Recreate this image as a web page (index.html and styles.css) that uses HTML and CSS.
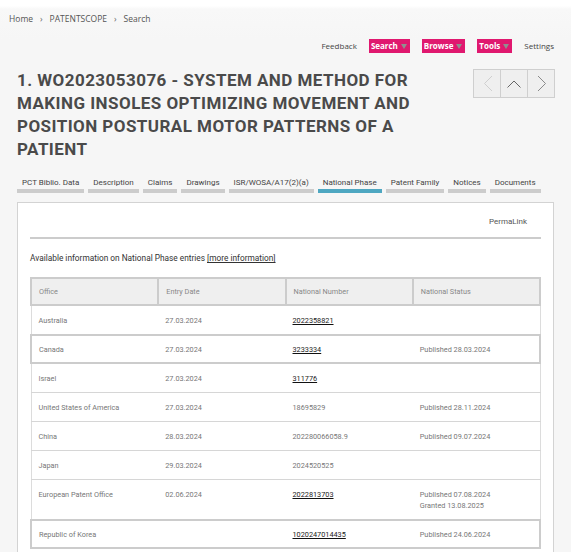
FILE: index.html
```html
<!DOCTYPE html>
<html lang="en">
<head>
<meta charset="utf-8">
<title>WO2023053076 - National Phase</title>
<link rel="stylesheet" href="styles.css">
</head>
<body>
<div class="crumbs">
  <span>Home</span><span class="sep">&#8250;</span><span>PATENTSCOPE</span><span class="sep">&#8250;</span><span>Search</span>
</div>
<nav class="topnav">
  <span class="nav-item">Feedback</span>
  <span class="nav-item pink">Search<i class="caret"></i></span>
  <span class="nav-item pink">Browse<i class="caret"></i></span>
  <span class="nav-item pink">Tools<i class="caret"></i></span>
  <span class="nav-item">Settings</span>
</nav>
<div class="titlebar">
  <h1 class="title">1. WO2023053076 - SYSTEM AND METHOD FOR MAKING INSOLES OPTIMIZING MOVEMENT AND POSITION POSTURAL MOTOR PATTERNS OF A PATIENT</h1>
  <div class="arrows">
    <span class="arrow"><svg width="26" height="27" viewBox="0 0 26 27"><polyline points="18,6 10.5,13.5 18,21" fill="none" stroke="#cfcfcf" stroke-width="1"/></svg></span>
    <span class="arrow"><svg width="26" height="27" viewBox="0 0 26 27"><polyline points="6.5,17.5 13,11 19.5,17.5" fill="none" stroke="#666" stroke-width="1"/></svg></span>
    <span class="arrow"><svg width="26" height="27" viewBox="0 0 26 27"><polyline points="10,6 17.5,13.5 10,21" fill="none" stroke="#8a8a8a" stroke-width="1"/></svg></span>
  </div>
</div>
<div class="tabs">
  <span class="tab">PCT Biblio. Data</span>
  <span class="tab">Description</span>
  <span class="tab">Claims</span>
  <span class="tab">Drawings</span>
  <span class="tab">ISR/WOSA/A17(2)(a)</span>
  <span class="tab active">National Phase</span>
  <span class="tab">Patent Family</span>
  <span class="tab">Notices</span>
  <span class="tab">Documents</span>
</div>
<section class="panel">
  <div class="permalink">PermaLink</div>
  <div class="rule"></div>
  <p class="intro">Available information on National Phase entries <a class="more">[more information]</a></p>
  <table class="np">
    <thead>
      <tr><th>Office</th><th>Entry Date</th><th>National Number</th><th>National Status</th></tr>
    </thead>
    <tbody>
      <tr><td>Australia</td><td>27.03.2024</td><td><a class="num">2022358821</a></td><td></td></tr>
      <tr class="hl"><td>Canada</td><td>27.03.2024</td><td><a class="num">3233334</a></td><td>Published 28.03.2024</td></tr>
      <tr><td>Israel</td><td>27.03.2024</td><td><a class="num">311776</a></td><td></td></tr>
      <tr><td>United States of America</td><td>27.03.2024</td><td>18695829</td><td>Published 28.11.2024</td></tr>
      <tr><td>China</td><td>28.03.2024</td><td>202280066058.9</td><td>Published 09.07.2024</td></tr>
      <tr><td>Japan</td><td>29.03.2024</td><td>2024520525</td><td></td></tr>
      <tr><td>European Patent Office</td><td>02.06.2024</td><td><a class="num">2022813703</a></td><td>Published 07.08.2024<br>Granted 13.08.2025</td></tr>
      <tr class="hl"><td>Republic of Korea</td><td></td><td><a class="num">1020247014435</a></td><td>Published 24.06.2024</td></tr>
    </tbody>
  </table>
</section>
</body>
</html>
```
FILE: styles.css
```css
html, body {
  margin: 0;
  padding: 0;
  overflow: hidden;
}
body {
  background: linear-gradient(to bottom, #ffffff 0, #ffffff 6px, #f8f8f8 9px, #f6f6f6 40px, #f6f6f6 100%);
  font-family: Roboto, "Liberation Sans", sans-serif;
  color: #444;
  min-height: 552px;
}
.crumbs {
  height: 32px;
  box-sizing: border-box;
  padding: 13px 9px 0;
  font: 400 8.5px/12px "Open Sans", sans-serif;
  color: #555;
  display: flex;
}
.sep {
  margin: 0 7px;
  color: #666;
}
.topnav {
  margin-top: 7px;
  height: 14px;
  display: flex;
  justify-content: flex-end;
  gap: 12px;
  padding-right: 17px;
  font: 400 8px/14px "Open Sans", sans-serif;
  color: #444;
}
.nav-item {
  display: flex;
  align-items: center;
}
.nav-item.pink {
  background: #e0186f;
  color: #fff;
  font-weight: 700;
  padding: 0 3px 0 2px;
}
.caret {
  display: inline-block;
  margin-left: 3px;
  width: 0;
  height: 0;
  border-left: 3px solid transparent;
  border-right: 3px solid transparent;
  border-top: 5px solid #8f8f8f;
}
.titlebar {
  margin-top: 16px;
  display: flex;
  justify-content: space-between;
  align-items: flex-start;
  padding: 0 16px 0 17px;
}
.title {
  margin: 0;
  width: 445px;
  font: 700 17px/23px Roboto, sans-serif;
  color: #4a4a4a;
  letter-spacing: 0.45px;
}
.arrows {
  display: flex;
  border: 1px solid #cfcfcf;
  background: #efefef;
  height: 27px;
}
.arrow {
  display: block;
  width: 26px;
  height: 27px;
}
.arrow + .arrow {
  border-left: 1px solid #cfcfcf;
}
.arrow svg {
  display: block;
}
.tabs {
  margin-top: 15px;
  display: flex;
  gap: 4px;
  padding-left: 17px;
}
.tab {
  font: 400 8px/13px Roboto, sans-serif;
  color: #444;
  padding: 0 5px;
  border-bottom: 4px solid #cccccc;
}
.tab.active {
  border-bottom-color: #4ea7c1;
}
.panel {
  margin: 9px 17px 0;
  background: #fff;
  border: 1px solid #d3d3d3;
  padding: 0 12px;
  min-height: 400px;
}
.permalink {
  padding: 13px 14px 0 0;
  text-align: right;
  font: 400 8px/12px Roboto, sans-serif;
  color: #555;
}
.rule {
  margin-top: 9px;
  height: 2px;
  background: #cccccc;
}
.intro {
  margin: 13px 0 0;
  font: 400 8.3px/12px Roboto, sans-serif;
  color: #333;
}
.more {
  color: #333;
  text-decoration: underline;
}
.np {
  margin-top: 13px;
  width: 100%;
  border-collapse: collapse;
  table-layout: fixed;
  font: 400 7.3px/11px Roboto, sans-serif;
  color: #777;
  border-left: 1px solid #dcdcdc;
  border-right: 1px solid #dcdcdc;
}
.np th {
  background: #efefef;
  border: 2px solid #cccccc;
  text-align: left;
  font-weight: 400;
  color: #888;
  padding: 7px 7px;
  line-height: 11px;
}
.np td {
  padding: 9px 7px 8px;
  vertical-align: top;
  border-bottom: 1px solid #d6d6d6;
}
.np tr.hl td {
  padding: 8px 7px 7px;
  border-top: 2px solid #cccccc;
  border-bottom: 2px solid #cccccc;
}
.np tr.hl td:first-child {
  border-left: 2px solid #cccccc;
}
.np tr.hl td:last-child {
  border-right: 2px solid #cccccc;
}
.num {
  color: #222;
  text-decoration: underline;
  text-decoration-color: #111;
  text-decoration-thickness: 1px;
  text-underline-offset: 1px;
}
```
